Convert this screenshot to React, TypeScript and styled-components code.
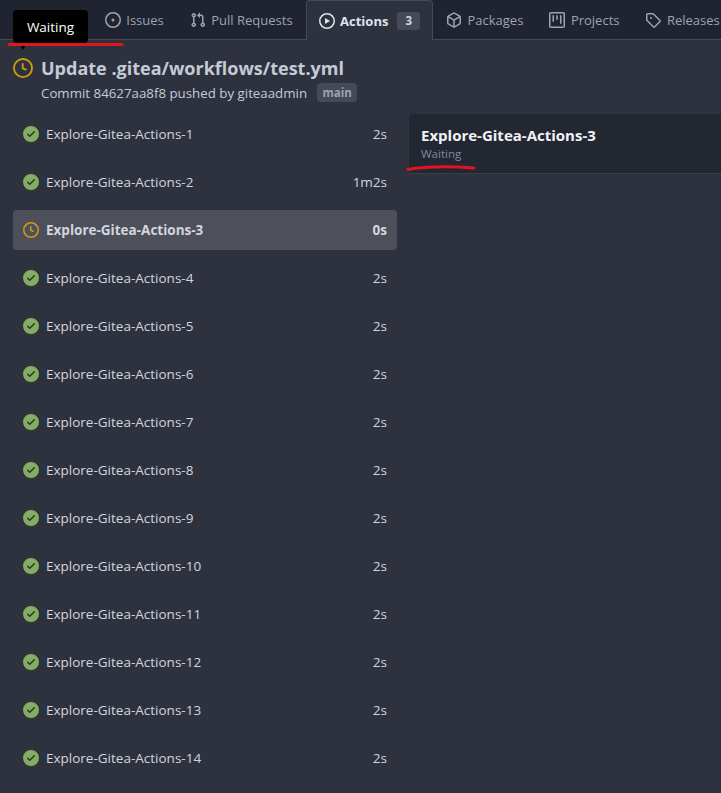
import React from 'react';
import styled, { createGlobalStyle } from 'styled-components';

const GlobalStyle = createGlobalStyle`
  html, body {
    margin: 0;
    padding: 0;
    background: #2e323e;
    overflow: hidden;
  }

  body {
    font-family: 'Open Sans', 'Noto Sans', Arial, sans-serif;
    font-size: 13.5px;
    color: #d2d6df;
  }
`;

const Page = styled.div`
  position: relative;
  width: 721px;
  height: 793px;
  overflow: hidden;
`;

const TabBar = styled.nav`
  display: flex;
  height: 39px;
  padding-left: 13px;
  background: #1f2430;
  border-bottom: 1px solid #454a57;
`;

const Tab = styled.div<{ $active?: boolean }>`
  display: flex;
  align-items: center;
  flex: none;
  gap: 5.5px;
  height: ${(p) => (p.$active ? '40px' : '39px')};
  padding: 0 12px;
  box-sizing: border-box;
  color: ${(p) => (p.$active ? '#dfe3ec' : '#9da3b0')};
  font-size: 13px;
  font-weight: ${(p) => (p.$active ? 700 : 400)};
  background: ${(p) => (p.$active ? '#2e323e' : 'transparent')};
  border: 1px solid ${(p) => (p.$active ? '#454a57' : 'transparent')};
  border-bottom: 0;
  border-radius: ${(p) => (p.$active ? '4px 4px 0 0' : '0')};
`;

const CountBadge = styled.span`
  margin-left: 3.5px;
  padding: 0 8px;
  height: 18px;
  line-height: 18px;
  font-size: 11.5px;
  font-weight: 700;
  color: #d2d6df;
  background: #454a57;
  border-radius: 3px;
`;

const Tooltip = styled.div`
  position: absolute;
  top: 10px;
  left: 13px;
  width: 75px;
  height: 33px;
  display: flex;
  align-items: center;
  justify-content: center;
  color: #fff;
  font-size: 13.5px;
  background: #000;
  border-radius: 4px;

  &::after {
    content: '';
    position: absolute;
    left: 6px;
    bottom: -7px;
    border: 4px solid transparent;
    border-bottom: 0;
    border-top: 7px solid #000;
  }
`;

const Scribble = styled.svg`
  position: absolute;
  overflow: visible;
`;

const Header = styled.header`
  display: flex;
  gap: 8px;
  padding: 14px 13px 0;
`;

const HeaderIcon = styled.div`
  flex: none;
  width: 20px;
  height: 20px;
  margin-top: 4px;
  color: #d19a0f;
`;

const Title = styled.h1`
  margin: 0;
  font-size: 18px;
  line-height: 28px;
  font-weight: 700;
  color: #c4cad6;
`;

const CommitLine = styled.div`
  display: flex;
  align-items: center;
  gap: 10px;
  height: 19px;
  margin-top: 1px;
  color: #c4cad6;
  font-size: 13.3px;
`;

const BranchTag = styled.span`
  padding: 0 5.5px;
  height: 19px;
  line-height: 19px;
  font-size: 11.5px;
  font-weight: 700;
  color: #9da3b0;
  background: #454a57;
  border-radius: 4px;
`;

const Body = styled.div`
  display: flex;
  margin-top: 11px;
`;

const JobList = styled.div`
  flex: none;
  width: 384px;
  margin-left: 13px;
  padding-top: 1px;
`;

const JobRow = styled.div<{ $active?: boolean }>`
  display: flex;
  align-items: center;
  gap: 7px;
  height: 40px;
  margin-bottom: 8px;
  padding: 0 10px;
  box-sizing: border-box;
  border-radius: 4px;
  font-size: 13.5px;
  font-weight: ${(p) => (p.$active ? 700 : 400)};
  color: #d2d6df;
  background: ${(p) => (p.$active ? '#4d505b' : 'transparent')};
`;

const JobName = styled.span`
  flex: 1;
`;

const StatusIcon = styled.span<{ $waiting?: boolean }>`
  display: flex;
  flex: none;
  color: ${(p) => (p.$waiting ? '#d19a0f' : '#86ad5f')};
`;

const DetailPanel = styled.div`
  flex: 1;
  margin: 1px 0 0 12px;
  height: 60px;
  padding: 11px 12px 0;
  box-sizing: border-box;
  background: #232732;
  border-bottom: 1px solid #3a3e4a;
  border-radius: 4px 0 0 0;
`;

const DetailTitle = styled.div`
  font-size: 15px;
  line-height: 20px;
  font-weight: 700;
  color: #f0f2f6;
`;

const DetailStatus = styled.div`
  font-size: 11.5px;
  line-height: 16px;
  margin-top: 1px;
  color: #8289a0;
`;

// octicons, 16px grid
const ICONS = {
  code: 'm11.28 3.22 4.25 4.25a.75.75 0 0 1 0 1.06l-4.25 4.25a.749.749 0 0 1-1.275-.326.749.749 0 0 1 .215-.734L13.94 8l-3.72-3.72a.749.749 0 0 1 .326-1.275.749.749 0 0 1 .734.215Zm-6.56 0a.751.751 0 0 1 1.042.018.751.751 0 0 1 .018 1.042L2.06 8l3.72 3.72a.749.749 0 0 1-.326 1.275.749.749 0 0 1-.734-.215L.47 8.53a.75.75 0 0 1 0-1.06Z',
  issue: 'M8 9.5a1.5 1.5 0 1 0 0-3 1.5 1.5 0 0 0 0 3Z M8 0a8 8 0 1 1 0 16A8 8 0 0 1 8 0ZM1.5 8a6.5 6.5 0 1 0 13 0 6.5 6.5 0 0 0-13 0Z',
  pull: 'M1.5 3.25a2.25 2.25 0 1 1 3 2.122v5.256a2.251 2.251 0 1 1-1.5 0V5.372A2.25 2.25 0 0 1 1.5 3.25Zm5.677-.177L9.573.677A.25.25 0 0 1 10 .854V2.5h1A2.5 2.5 0 0 1 13.5 5v5.628a2.251 2.251 0 1 1-1.5 0V5a1 1 0 0 0-1-1h-1v1.646a.25.25 0 0 1-.427.177L7.177 3.427a.25.25 0 0 1 0-.354ZM3.75 2.5a.75.75 0 1 0 0 1.5.75.75 0 0 0 0-1.5Zm0 9.5a.75.75 0 1 0 0 1.5.75.75 0 0 0 0-1.5Zm8.25.75a.75.75 0 1 0 1.5 0 .75.75 0 0 0-1.5 0Z',
  play: 'M8 0a8 8 0 1 1 0 16A8 8 0 0 1 8 0ZM1.5 8a6.5 6.5 0 1 0 13 0 6.5 6.5 0 0 0-13 0Zm4.879-2.773 4.264 2.559a.25.25 0 0 1 0 .428l-4.264 2.559A.25.25 0 0 1 6 10.559V5.442a.25.25 0 0 1 .379-.215Z',
  package: 'm8.878.392 5.25 3.045c.54.314.872.89.872 1.514v6.098a1.75 1.75 0 0 1-.872 1.514l-5.25 3.045a1.75 1.75 0 0 1-1.756 0l-5.25-3.045A1.75 1.75 0 0 1 1 11.049V4.951c0-.624.332-1.201.872-1.514L7.122.392a1.75 1.75 0 0 1 1.756 0ZM7.875 1.69l-4.63 2.685L8 7.133l4.755-2.758-4.63-2.685a.248.248 0 0 0-.25 0ZM2.5 5.677v5.372c0 .09.047.171.125.216l4.625 2.683V8.432Zm6.25 8.271 4.625-2.683a.25.25 0 0 0 .125-.216V5.677L8.75 8.432Z',
  project: 'M1.75 0h12.5C15.216 0 16 .784 16 1.75v12.5A1.75 1.75 0 0 1 14.25 16H1.75A1.75 1.75 0 0 1 0 14.25V1.75C0 .784.784 0 1.75 0ZM1.5 1.75v12.5c0 .138.112.25.25.25h12.5a.25.25 0 0 0 .25-.25V1.75a.25.25 0 0 0-.25-.25H1.75a.25.25 0 0 0-.25.25ZM11.75 3a.75.75 0 0 1 .75.75v7.5a.75.75 0 0 1-1.5 0v-7.5a.75.75 0 0 1 .75-.75Zm-8.25.75a.75.75 0 0 1 1.5 0v5.5a.75.75 0 0 1-1.5 0ZM8 3a.75.75 0 0 1 .75.75v3.5a.75.75 0 0 1-1.5 0v-3.5A.75.75 0 0 1 8 3Z',
  tag: 'M1 7.775V2.75C1 1.784 1.784 1 2.75 1h5.025c.464 0 .91.184 1.238.513l6.25 6.25a1.75 1.75 0 0 1 0 2.474l-5.026 5.026a1.75 1.75 0 0 1-2.474 0l-6.25-6.25A1.752 1.752 0 0 1 1 7.775Zm1.5 0c0 .066.026.13.073.177l6.25 6.25a.25.25 0 0 0 .354 0l5.025-5.025a.25.25 0 0 0 0-.354l-6.25-6.25a.25.25 0 0 0-.177-.073H2.75a.25.25 0 0 0-.25.25ZM6 5a1 1 0 1 1 0 2 1 1 0 0 1 0-2Z',
  clock: 'M8 0a8 8 0 1 1 0 16A8 8 0 0 1 8 0ZM1.5 8a6.5 6.5 0 1 0 13 0 6.5 6.5 0 0 0-13 0Zm7-3.25v2.992l2.028.812a.75.75 0 0 1-.557 1.392l-2.5-1A.751.751 0 0 1 7 8.25v-3.5a.75.75 0 0 1 1.5 0Z',
  check: 'M8 16A8 8 0 1 1 8 0a8 8 0 0 1 0 16Zm3.78-9.72a.751.751 0 0 0-.018-1.042.751.751 0 0 0-1.042-.018L6.75 9.19 5.28 7.72a.751.751 0 0 0-1.042.018.751.751 0 0 0-.018 1.042l2 2a.75.75 0 0 0 1.06 0Z',
};

function Icon({ name, size = 16 }: { name: keyof typeof ICONS; size?: number }) {
  return (
    <svg width={size} height={size} viewBox="0 0 16 16" fill="currentColor" style={{ flex: 'none', display: 'block' }}>
      <path d={ICONS[name]} />
    </svg>
  );
}

const jobs = [
  { id: 1, time: '2s' },
  { id: 2, time: '1m2s' },
  { id: 3, time: '0s', waiting: true },
  { id: 4, time: '2s' },
  { id: 5, time: '2s' },
  { id: 6, time: '2s' },
  { id: 7, time: '2s' },
  { id: 8, time: '2s' },
  { id: 9, time: '2s' },
  { id: 10, time: '2s' },
  { id: 11, time: '2s' },
  { id: 12, time: '2s' },
  { id: 13, time: '2s' },
  { id: 14, time: '2s' },
];

export default function App() {
  return (
    <Page>
      <GlobalStyle />
      <TabBar>
        <Tab>
          <Icon name="code" />
          Code
        </Tab>
        <Tab>
          <Icon name="issue" />
          Issues
        </Tab>
        <Tab>
          <Icon name="pull" />
          Pull Requests
        </Tab>
        <Tab $active>
          <Icon name="play" />
          Actions
          <CountBadge>3</CountBadge>
        </Tab>
        <Tab>
          <Icon name="package" />
          Packages
        </Tab>
        <Tab>
          <Icon name="project" />
          Projects
        </Tab>
        <Tab>
          <Icon name="tag" />
          Releases
        </Tab>
      </TabBar>
      <Header>
        <HeaderIcon>
          <Icon name="clock" size={20} />
        </HeaderIcon>
        <div>
          <Title>Update .gitea/workflows/test.yml</Title>
          <CommitLine>
            Commit 84627aa8f8 pushed by giteaadmin
            <BranchTag>main</BranchTag>
          </CommitLine>
        </div>
      </Header>
      <Body>
        <JobList>
          {jobs.map((job) => (
            <JobRow key={job.id} $active={job.waiting}>
              <StatusIcon $waiting={job.waiting}>
                <Icon name={job.waiting ? 'clock' : 'check'} />
              </StatusIcon>
              <JobName>Explore-Gitea-Actions-{job.id}</JobName>
              {job.time}
            </JobRow>
          ))}
        </JobList>
        <DetailPanel>
          <DetailTitle>Explore-Gitea-Actions-3</DetailTitle>
          <DetailStatus>Waiting</DetailStatus>
        </DetailPanel>
      </Body>
      <Tooltip>Waiting</Tooltip>
      <Scribble style={{ left: 8, top: 42 }} width="115" height="5">
        <path d="M1 2.5 L114 2.5" stroke="#e0161c" strokeWidth="3" strokeLinecap="round" fill="none" />
      </Scribble>
      <Scribble style={{ left: 407, top: 165 }} width="68" height="7">
        <path d="M1 4.5 C15 2 40 1 67 3" stroke="#e0161c" strokeWidth="3" strokeLinecap="round" fill="none" />
      </Scribble>
    </Page>
  );
}
